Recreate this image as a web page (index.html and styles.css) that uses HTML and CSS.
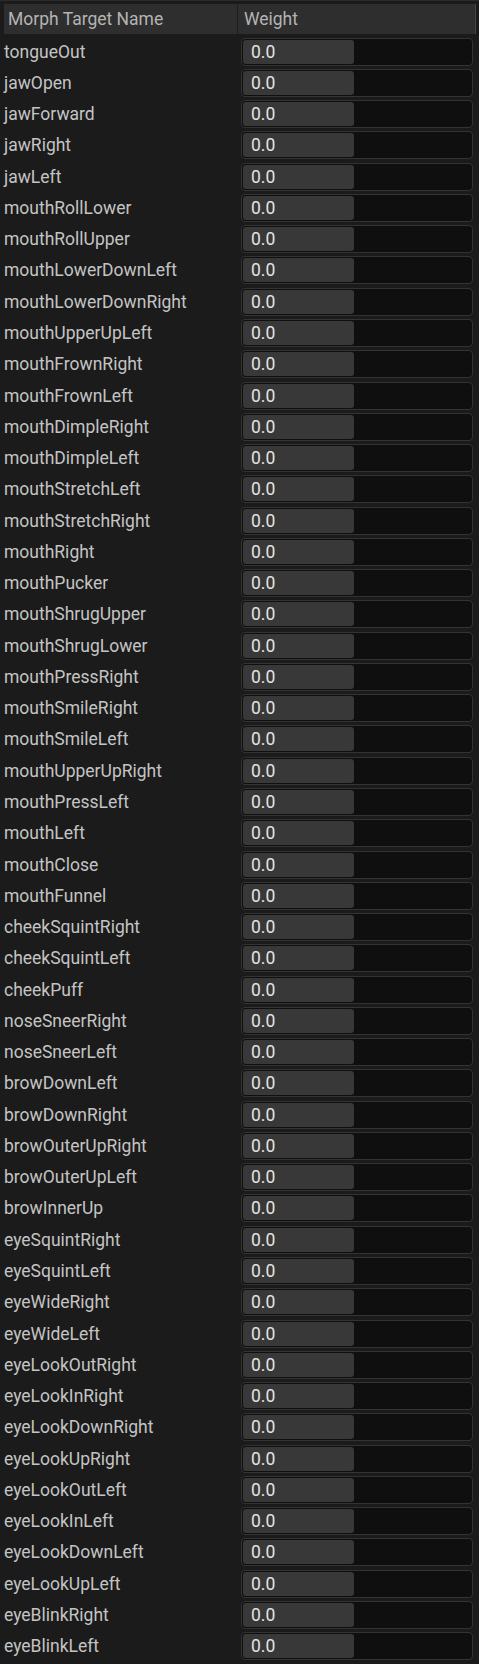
FILE: index.html
```html
<!DOCTYPE html>
<html>
<head>
<meta charset="utf-8">
<link rel="stylesheet" href="styles.css">
</head>
<body>
<div class="panel">
  <div class="header">
    <div class="hcell name">Morph Target Name</div>
    <div class="hcell weight">Weight</div>
  </div>
  <div class="rows">
    <div class="row"><div class="label">tongueOut</div><div class="field"><div class="fill">0.0</div></div></div>
    <div class="row"><div class="label">jawOpen</div><div class="field"><div class="fill">0.0</div></div></div>
    <div class="row"><div class="label">jawForward</div><div class="field"><div class="fill">0.0</div></div></div>
    <div class="row"><div class="label">jawRight</div><div class="field"><div class="fill">0.0</div></div></div>
    <div class="row"><div class="label">jawLeft</div><div class="field"><div class="fill">0.0</div></div></div>
    <div class="row"><div class="label">mouthRollLower</div><div class="field"><div class="fill">0.0</div></div></div>
    <div class="row"><div class="label">mouthRollUpper</div><div class="field"><div class="fill">0.0</div></div></div>
    <div class="row"><div class="label">mouthLowerDownLeft</div><div class="field"><div class="fill">0.0</div></div></div>
    <div class="row"><div class="label">mouthLowerDownRight</div><div class="field"><div class="fill">0.0</div></div></div>
    <div class="row"><div class="label">mouthUpperUpLeft</div><div class="field"><div class="fill">0.0</div></div></div>
    <div class="row"><div class="label">mouthFrownRight</div><div class="field"><div class="fill">0.0</div></div></div>
    <div class="row"><div class="label">mouthFrownLeft</div><div class="field"><div class="fill">0.0</div></div></div>
    <div class="row"><div class="label">mouthDimpleRight</div><div class="field"><div class="fill">0.0</div></div></div>
    <div class="row"><div class="label">mouthDimpleLeft</div><div class="field"><div class="fill">0.0</div></div></div>
    <div class="row"><div class="label">mouthStretchLeft</div><div class="field"><div class="fill">0.0</div></div></div>
    <div class="row"><div class="label">mouthStretchRight</div><div class="field"><div class="fill">0.0</div></div></div>
    <div class="row"><div class="label">mouthRight</div><div class="field"><div class="fill">0.0</div></div></div>
    <div class="row"><div class="label">mouthPucker</div><div class="field"><div class="fill">0.0</div></div></div>
    <div class="row"><div class="label">mouthShrugUpper</div><div class="field"><div class="fill">0.0</div></div></div>
    <div class="row"><div class="label">mouthShrugLower</div><div class="field"><div class="fill">0.0</div></div></div>
    <div class="row"><div class="label">mouthPressRight</div><div class="field"><div class="fill">0.0</div></div></div>
    <div class="row"><div class="label">mouthSmileRight</div><div class="field"><div class="fill">0.0</div></div></div>
    <div class="row"><div class="label">mouthSmileLeft</div><div class="field"><div class="fill">0.0</div></div></div>
    <div class="row"><div class="label">mouthUpperUpRight</div><div class="field"><div class="fill">0.0</div></div></div>
    <div class="row"><div class="label">mouthPressLeft</div><div class="field"><div class="fill">0.0</div></div></div>
    <div class="row"><div class="label">mouthLeft</div><div class="field"><div class="fill">0.0</div></div></div>
    <div class="row"><div class="label">mouthClose</div><div class="field"><div class="fill">0.0</div></div></div>
    <div class="row"><div class="label">mouthFunnel</div><div class="field"><div class="fill">0.0</div></div></div>
    <div class="row"><div class="label">cheekSquintRight</div><div class="field"><div class="fill">0.0</div></div></div>
    <div class="row"><div class="label">cheekSquintLeft</div><div class="field"><div class="fill">0.0</div></div></div>
    <div class="row"><div class="label">cheekPuff</div><div class="field"><div class="fill">0.0</div></div></div>
    <div class="row"><div class="label">noseSneerRight</div><div class="field"><div class="fill">0.0</div></div></div>
    <div class="row"><div class="label">noseSneerLeft</div><div class="field"><div class="fill">0.0</div></div></div>
    <div class="row"><div class="label">browDownLeft</div><div class="field"><div class="fill">0.0</div></div></div>
    <div class="row"><div class="label">browDownRight</div><div class="field"><div class="fill">0.0</div></div></div>
    <div class="row"><div class="label">browOuterUpRight</div><div class="field"><div class="fill">0.0</div></div></div>
    <div class="row"><div class="label">browOuterUpLeft</div><div class="field"><div class="fill">0.0</div></div></div>
    <div class="row"><div class="label">browInnerUp</div><div class="field"><div class="fill">0.0</div></div></div>
    <div class="row"><div class="label">eyeSquintRight</div><div class="field"><div class="fill">0.0</div></div></div>
    <div class="row"><div class="label">eyeSquintLeft</div><div class="field"><div class="fill">0.0</div></div></div>
    <div class="row"><div class="label">eyeWideRight</div><div class="field"><div class="fill">0.0</div></div></div>
    <div class="row"><div class="label">eyeWideLeft</div><div class="field"><div class="fill">0.0</div></div></div>
    <div class="row"><div class="label">eyeLookOutRight</div><div class="field"><div class="fill">0.0</div></div></div>
    <div class="row"><div class="label">eyeLookInRight</div><div class="field"><div class="fill">0.0</div></div></div>
    <div class="row"><div class="label">eyeLookDownRight</div><div class="field"><div class="fill">0.0</div></div></div>
    <div class="row"><div class="label">eyeLookUpRight</div><div class="field"><div class="fill">0.0</div></div></div>
    <div class="row"><div class="label">eyeLookOutLeft</div><div class="field"><div class="fill">0.0</div></div></div>
    <div class="row"><div class="label">eyeLookInLeft</div><div class="field"><div class="fill">0.0</div></div></div>
    <div class="row"><div class="label">eyeLookDownLeft</div><div class="field"><div class="fill">0.0</div></div></div>
    <div class="row"><div class="label">eyeLookUpLeft</div><div class="field"><div class="fill">0.0</div></div></div>
    <div class="row"><div class="label">eyeBlinkRight</div><div class="field"><div class="fill">0.0</div></div></div>
    <div class="row"><div class="label">eyeBlinkLeft</div><div class="field"><div class="fill">0.0</div></div></div>
  </div>
</div>
</body>
</html>
```
FILE: styles.css
```css
html, body {
  margin: 0;
  padding: 0;
  background: #1b1b1b;
}
body {
  width: 479px;
  height: 1664px;
  overflow: hidden;
  font-family: Roboto, "Liberation Sans", sans-serif;
}
.panel {
  border-top: 1px solid #2b2b2b;
  padding: 3px 4px 0 4px;
}
.header {
  display: flex;
  height: 30px;
  background: #2e2e2e;
  border-right: 1px solid #454545;
  margin-right: -1px;
}
.hcell {
  display: flex;
  align-items: center;
  font-size: 17.5px;
  color: #b4b4b4;
}
.hcell.name {
  width: 229px;
  padding-left: 4px;
  border-right: 1px solid #1e1e1e;
}
.hcell.weight {
  flex: 1;
  padding-left: 6px;
}
.rows {
  padding-top: 2px;
  margin-left: -4px;
}
.row {
  display: flex;
  align-items: center;
  height: 31.27px;
}
.label {
  width: 241px;
  padding-left: 4px;
  box-sizing: border-box;
  font-size: 17.5px;
  color: #c4c4c4;
  white-space: nowrap;
}
.field {
  width: 232px;
  height: 28px;
  box-sizing: border-box;
  border: 1px solid #333333;
  border-radius: 4px;
  background: #0f0f0f;
  padding: 1px;
  display: flex;
}
.fill {
  width: 111px;
  border-radius: 3px;
  background: #383838;
  color: #e4e4e4;
  font-size: 17.5px;
  display: flex;
  align-items: center;
  padding-left: 8px;
  box-sizing: border-box;
}
```
